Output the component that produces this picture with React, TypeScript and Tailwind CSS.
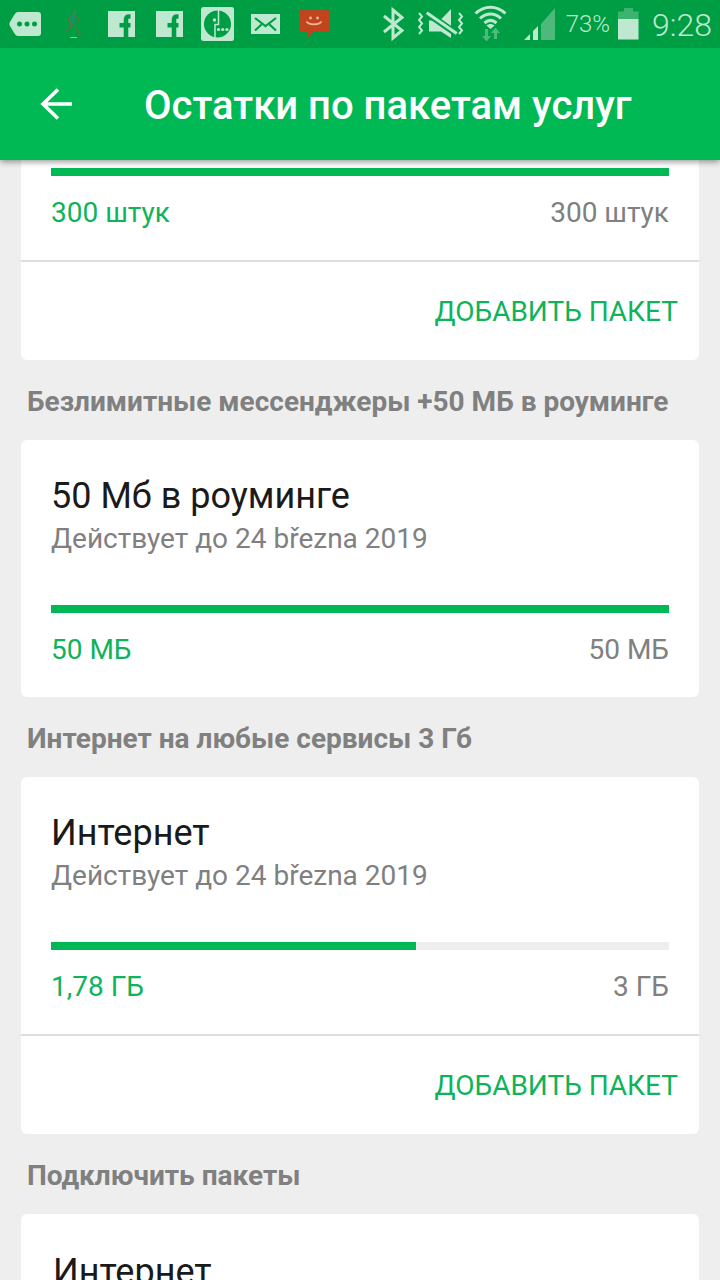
import type { ReactNode } from 'react';

interface PackageCardProps {
  title?: string;
  validUntil?: string;
  left: string;
  total: string;
  percent: number;
  canAdd?: boolean;
}

const StatusIcon = ({ label, width = 48, className = '', children }: { label: string; width?: number; className?: string; children: ReactNode }) => (
  <svg
    role="img"
    aria-label={label}
    width={width}
    height={48}
    viewBox={`0 0 ${width} 48`}
    className={`shrink-0 ${className}`}
  >
    {children}
  </svg>
);

const FacebookIcon = () => (
  <StatusIcon label="Facebook">
    <rect x="11" y="11" width="27" height="26" fill="currentColor" />
    <path
      fill="none"
      stroke="#009e44"
      strokeWidth="4.600"
      d="M33.500 16.500H32C29.800 16.500 29 17.500 29 20V37M22.500 25.300H33.500"
    />
  </StatusIcon>
);

const StatusBar = () => (
  <div className="flex h-12 items-center justify-between bg-[#009e44] pl-px pr-2 text-[#bfe8d0]">
    <div className="flex">
      <StatusIcon label="Chat">
        <path fill="currentColor" d="M17 12H37a3 3 0 0 1 3 3V33a3 3 0 0 1-3 3H17c-1.500 0-2.500-1-3.500-2.500L9 26c-.8-1.300-.8-2.700 0-4l4.500-7.500C14.500 13 15.500 12 17 12Z" />
        <g fill="#009e44">
          <circle cx="18.500" cy="24" r="2.500" />
          <circle cx="26" cy="24" r="2.500" />
          <circle cx="33.500" cy="24" r="2.500" />
        </g>
      </StatusIcon>
      <StatusIcon label="Runner">
        <g fill="none" strokeLinecap="round" strokeLinejoin="round">
          <path d="M24.500 15.500L23 22" stroke="#129468" strokeWidth="5" />
          <path d="M22 16L19 19L21 22M27 16L30 19L28 21M23 23L27 27L30 34L32 35M22 23L21 28L17 31" stroke="#4f7c38" strokeWidth="1.500" />
        </g>
        <circle cx="26" cy="12" r="1.700" fill="#4c8441" />
        <path d="M21 37.500H28" stroke="#7dcc9a" />
      </StatusIcon>
      <FacebookIcon />
      <FacebookIcon />
      <StatusIcon label="Assistant">
        <rect x="8" y="7" width="33" height="34" rx="2.500" fill="currentColor" />
        <circle cx="24.500" cy="24" r="13.500" fill="#009e44" />
        <path d="M25.500 10V24.500H22V38" fill="none" stroke="currentColor" strokeWidth="1.500" />
        <g fill="currentColor">
          <circle cx="21.500" cy="20" r="1.700" />
          <circle cx="25.500" cy="29.500" r="1.600" />
          <circle cx="29.700" cy="29.500" r="1.600" />
          <circle cx="33.900" cy="29.500" r="1.600" />
        </g>
      </StatusIcon>
      <StatusIcon label="Mail">
        <rect x="10" y="14" width="29" height="20" fill="currentColor" />
        <path d="M14 18L24.500 26L35 18M14 30.500L20.500 24.500M35 30.500L28.500 24.500" fill="none" stroke="#009e44" strokeWidth="2.200" />
      </StatusIcon>
      <StatusIcon label="Messages">
        <path d="M10 10H40V32H24L18.500 38V32H10Z" fill="#c2441f" />
        <path d="M10 10H40" stroke="#a4501f" strokeWidth="1.500" />
        <g fill="#efb894">
          <circle cx="21.500" cy="18" r="1.400" />
          <circle cx="28.500" cy="18" r="1.400" />
        </g>
        <path d="M17.500 21.500C20 25.300 30 25.300 32.500 21.500" fill="none" stroke="#efb894" strokeWidth="1.600" />
      </StatusIcon>
    </div>

    <div className="flex items-center">
      <StatusIcon label="Bluetooth" width={24}>
        <path d="M2 16L20 30.500L11 38V10L20 17.500L2 32" fill="none" stroke="currentColor" strokeWidth="3" />
      </StatusIcon>
      <StatusIcon label="Vibrate" width={48} className="ml-3">
        <path d="M1 13L4 16.500L1 20L4 23.500L1 27L4 30.500L1 34M41 13L44 16.500L41 20L44 23.500L41 27L44 30.500L41 34" fill="none" stroke="currentColor" strokeWidth="2" />
        <path d="M11 20.500H22L33 9V38L23 31.500H11Z" fill="currentColor" />
        <path d="M8 12.500L39 34" stroke="#009e44" strokeWidth="6.500" />
        <path d="M8.700 12.700L38.700 33.500" stroke="currentColor" strokeWidth="3" />
      </StatusIcon>
      <StatusIcon label="Wi-Fi" width={34} className="ml-2">
        <g fill="none" stroke="currentColor" strokeWidth="3">
          <path d="M1.500 13.500C10.500 5 22.500 5 31.500 13.500" />
          <path d="M6 18.500C12.500 12.500 20.500 12.500 27 18.500" />
          <path d="M10.500 23C14.500 19.500 18.500 19.500 22.500 23" />
        </g>
        <path d="M12.500 25.500C15.500 23.500 17.500 23.500 20.500 25.500L16.500 29Z" fill="currentColor" />
        <path d="M11 29H14V36H17L12.500 41.500L8 36H11ZM20 39V33H17L21.500 27.500L26 33H23V39Z" fill="#4dba7b" />
      </StatusIcon>
      <StatusIcon label="Signal" width={34} className="ml-4">
        <path d="M0 40L6 34V40ZM9 31L14 26V40H9Z" fill="currentColor" />
        <path d="M17 24L31 8V40H17Z" fill="#4dba7b" />
      </StatusIcon>
      <span className="ml-2 text-2xl font-light">73%</span>
      <StatusIcon label="Battery" width={22} className="ml-2">
        <path d="M6 8H15V11.500H20.500V19H0V11.500H6Z" fill="#3db370" />
        <path d="M0 19H20.500V39.500H0Z" fill="currentColor" />
      </StatusIcon>
      <span className="ml-3 pt-0.5 text-[32px] font-light">9:28</span>
    </div>
  </div>
);

const Header = () => (
  <header className="relative z-10 shrink-0 bg-[#00b954] shadow-[0_2px_6px_rgba(0,0,0,0.4)]">
    <StatusBar />
    <div className="flex h-28 items-center">
      <button type="button" aria-label="Назад" className="flex h-28 w-28 items-center justify-center text-white">
        <svg width="32" height="32" viewBox="0 0 32 32" fill="none" stroke="currentColor" strokeWidth="3.600">
          <path d="M18 1.500L3 16L18 30.500M3 16H32" />
        </svg>
      </button>
      <h1 className="ml-8 whitespace-nowrap pt-1 text-[40px] font-medium leading-[48px] text-white">
        Остатки по пакетам услуг
      </h1>
    </div>
  </header>
);

const PackageCard = ({ title, validUntil, left, total, percent, canAdd = false }: PackageCardProps) => (
  <section className={`bg-white ${title ? 'rounded-md' : 'rounded-b-md'}`}>
    <div className={`px-[30px] pb-[26px] ${title ? 'pt-[34px]' : 'pt-2'}`}>
      {title && (
        <div className="mb-[45px]">
          <h3 className="text-4xl leading-[44px] text-[#1a1a1a]">{title}</h3>
          <p className="text-[28px] leading-[42px]">{validUntil}</p>
        </div>
      )}
      <div className="h-2 bg-[#eeeeee]">
        <div className="h-2 bg-[#00b954]" style={{ width: `${percent}%` }} />
      </div>
      <div className="mt-4 flex justify-between text-[28px] leading-[42px]">
        <span className="text-[#0fb35a]">{left}</span>
        <span>{total}</span>
      </div>
    </div>
    {canAdd && (
      <div className="flex justify-end border-t-2 border-[#dddddd]">
        <button type="button" className="h-[98px] px-[21px] pt-0.5 text-[28px] leading-[42px] text-[#0fb35a]">
          ДОБАВИТЬ ПАКЕТ
        </button>
      </div>
    )}
  </section>
);

const SectionTitle = ({ children }: { children: ReactNode }) => (
  <h2 className="px-1.5 pb-[17px] pt-[21px] text-[28px] font-bold leading-[42px]">{children}</h2>
);

const App = () => {
  return (
    <div className="flex h-screen flex-col overflow-hidden bg-[#eeeeee] font-[Roboto,sans-serif] text-[#808080]">
      <Header />
      <main className="min-h-0 flex-1 overflow-hidden px-[21px]">
        <PackageCard left="300 штук" total="300 штук" percent={100} canAdd />

        <SectionTitle>Безлимитные мессенджеры +50 МБ в роуминге</SectionTitle>
        <PackageCard
          title="50 Мб в роуминге"
          validUntil="Действует до 24 března 2019"
          left="50 МБ"
          total="50 МБ"
          percent={100}
        />

        <SectionTitle>Интернет на любые сервисы 3 Гб</SectionTitle>
        <PackageCard
          title="Интернет"
          validUntil="Действует до 24 března 2019"
          left="1,78 ГБ"
          total="3 ГБ"
          percent={59}
          canAdd
        />

        <SectionTitle>Подключить пакеты</SectionTitle>
        <section className="rounded-md bg-white px-8 py-9">
          <h3 className="text-4xl leading-[44px] text-[#1a1a1a]">Интернет</h3>
        </section>
      </main>
    </div>
  );
};

export default App;
